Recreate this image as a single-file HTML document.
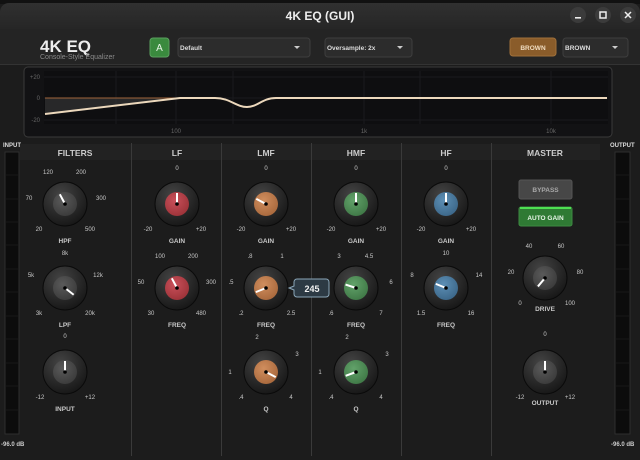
<!DOCTYPE html>
<html><head><meta charset="utf-8"><style>
*{margin:0;padding:0;box-sizing:border-box}
body{width:640px;height:460px;background:#111;overflow:hidden;font-family:"Liberation Sans",sans-serif}
svg{position:absolute;left:0;top:0}
</style></head><body>
<svg width="640" height="460" viewBox="0 0 640 460" font-family="Liberation Sans, sans-serif">
<defs>
<radialGradient id="ko" cx="0.4" cy="0.3" r="0.8"><stop offset="0" stop-color="#444"/><stop offset="1" stop-color="#121212"/></radialGradient>
<radialGradient id="cg" cx="0.4" cy="0.35" r="0.7"><stop offset="0" stop-color="#5a5a5a"/><stop offset="1" stop-color="#3a3a3a"/></radialGradient>
<radialGradient id="cr" cx="0.4" cy="0.35" r="0.7"><stop offset="0" stop-color="#c9505a"/><stop offset="1" stop-color="#9c3238"/></radialGradient>
<radialGradient id="co" cx="0.4" cy="0.35" r="0.7"><stop offset="0" stop-color="#d08e5e"/><stop offset="1" stop-color="#a8683c"/></radialGradient>
<radialGradient id="cgr" cx="0.4" cy="0.35" r="0.7"><stop offset="0" stop-color="#62a26a"/><stop offset="1" stop-color="#3f7846"/></radialGradient>
<radialGradient id="cb" cx="0.4" cy="0.35" r="0.7"><stop offset="0" stop-color="#5d8fb5"/><stop offset="1" stop-color="#3b6688"/></radialGradient>
<linearGradient id="tb" x1="0" y1="0" x2="0" y2="1"><stop offset="0" stop-color="#303030"/><stop offset="1" stop-color="#262626"/></linearGradient>
</defs>
<rect x="0" y="0" width="640" height="460" fill="#1c1c1c"/>
<rect x="0" y="0" width="640" height="4" fill="#111"/>
<path d="M0 12a9 9 0 0 1 9-9h622a9 9 0 0 1 9 9v17H0z" fill="url(#tb)"/>
<text x="320" y="20" text-anchor="middle" fill="#eee" font-size="12" font-weight="bold">4K EQ (GUI)</text>
<circle cx="578" cy="15" r="8" fill="#3b3b3b"/><rect x="575" y="17" width="6" height="1.6" fill="#eee"/>
<circle cx="603" cy="15" r="8" fill="#3b3b3b"/><rect x="600" y="12" width="6" height="6" fill="none" stroke="#eee" stroke-width="1.5"/>
<circle cx="628" cy="15" r="8" fill="#3b3b3b"/><path d="M625 12l6 6M631 12l-6 6" stroke="#eee" stroke-width="1.5"/>
<rect x="0" y="29" width="640" height="35" fill="#242424"/>
<rect x="0" y="64" width="640" height="1" fill="#333"/>
<text x="40" y="52" fill="#eee" font-size="17" font-weight="bold">4K EQ</text>
<text x="40" y="59" fill="#8a8a8a" font-size="7">Console-Style Equalizer</text>
<rect x="150" y="38" width="19" height="19" rx="3" fill="#3a8a3e" stroke="#5aa05e"/>
<text x="159.5" y="51" text-anchor="middle" fill="#e8f5e8" font-size="10">A</text>
<rect x="178" y="38" width="132" height="19" rx="3" fill="#2c2c2c" stroke="#3e3e3e"/>
<text x="180" y="50" fill="#ddd" font-size="6.5" font-weight="bold">Default</text>
<path d="M294 46h6l-3 3z" fill="#ccc"/>
<rect x="325" y="38" width="87" height="19" rx="3" fill="#2c2c2c" stroke="#3e3e3e"/>
<text x="327" y="50" fill="#ddd" font-size="6.5" font-weight="bold">Oversample: 2x</text>
<path d="M397 46h6l-3 3z" fill="#ccc"/>
<rect x="510" y="38" width="46" height="18" rx="3" fill="#8a5c2a" stroke="#a0703a"/>
<text x="533" y="50" text-anchor="middle" fill="#f0dcc0" font-size="6.5" font-weight="bold">BROWN</text>
<rect x="563" y="38" width="65" height="19" rx="3" fill="#2c2c2c" stroke="#3e3e3e"/>
<text x="565" y="50" fill="#ddd" font-size="6.5" font-weight="bold">BROWN</text>
<path d="M612 46h6l-3 3z" fill="#ccc"/>
<rect x="24" y="67" width="588" height="70" rx="4" fill="#121214" stroke="#3a3a3a"/>
<rect x="44" y="71" width="564" height="53" fill="#0e0e10"/>
<g stroke="#1a1a1e" stroke-width="1">
<path d="M116 71v53M176 71v53M233 71v53M364 71v53M420 71v53M551 71v53M44 77h564M44 98h564M44 120h564"/>
</g>
<text x="40" y="79" text-anchor="end" fill="#666" font-size="6">+20</text>
<text x="40" y="100" text-anchor="end" fill="#666" font-size="6">0</text>
<text x="40" y="122" text-anchor="end" fill="#666" font-size="6">-20</text>
<text x="176" y="133" text-anchor="middle" fill="#666" font-size="6">100</text>
<text x="364" y="133" text-anchor="middle" fill="#666" font-size="6">1k</text>
<text x="551" y="133" text-anchor="middle" fill="#666" font-size="6">10k</text>
<path d="M45 98 L45 114 L180 98 Z" fill="#3a3a3a" opacity="0.6"/>
<path d="M45 98H190" stroke="#a0643a" stroke-width="1"/>
<path d="M45 114 L180 98 L215 98 C230 98 236 107 247 107 C258 107 262 98 276 98 L607 98" fill="none" stroke="#ecd8bc" stroke-width="2"/>
<text x="3" y="147" fill="#ddd" font-size="6" font-weight="bold">INPUT</text>
<rect x="5" y="152" width="14" height="282" fill="#0c0c0c" stroke="#2e2e2e"/>
<text x="1" y="446" fill="#ccc" font-size="6" font-weight="bold">-96.0 dB</text>
<text x="610" y="147" fill="#ddd" font-size="6" font-weight="bold">OUTPUT</text>
<rect x="615" y="152" width="15" height="282" fill="#0c0c0c" stroke="#2e2e2e"/>
<text x="611" y="446" fill="#ccc" font-size="6" font-weight="bold">-96.0 dB</text>
<g stroke="#181818"><path d="M6 175h12M6 199h12M6 222h12M6 245h12M6 269h12M6 292h12M6 316h12M6 339h12M6 363h12M6 386h12M6 410h12M616 175h13M616 199h13M616 222h13M616 245h13M616 269h13M616 292h13M616 316h13M616 339h13M616 363h13M616 386h13M616 410h13"/></g>
<rect x="20" y="144" width="580" height="16" fill="#222"/>
<g fill="#3a3a3a"><rect x="131" y="143" width="1" height="313"/><rect x="221" y="143" width="1" height="313"/><rect x="311" y="143" width="1" height="313"/><rect x="401" y="143" width="1" height="313"/><rect x="491" y="143" width="1" height="313"/></g>
<g fill="#ccc" font-size="8.5" font-weight="bold" text-anchor="middle">
<text x="75" y="156">FILTERS</text><text x="177" y="156">LF</text><text x="266" y="156">LMF</text><text x="356" y="156">HMF</text><text x="446" y="156">HF</text><text x="545" y="156">MASTER</text>
</g>
<g>
<g transform="translate(65,204)"><circle r="22" fill="url(#ko)" stroke="#0a0a0a"/><circle r="12" fill="url(#cg)"/><line y2="-11" stroke="#fff" stroke-width="2" transform="rotate(-28)"/><circle r="1.8" fill="#000"/></g>
<g transform="translate(65,288)"><circle r="22" fill="url(#ko)" stroke="#0a0a0a"/><circle r="12" fill="url(#cg)"/><line y2="-11" stroke="#fff" stroke-width="2" transform="rotate(128)"/><circle r="1.8" fill="#000"/></g>
<g transform="translate(65,372)"><circle r="22" fill="url(#ko)" stroke="#0a0a0a"/><circle r="12" fill="url(#cg)"/><line y2="-11" stroke="#fff" stroke-width="2"/><circle r="1.8" fill="#000"/></g>
<g transform="translate(177,204)"><circle r="22" fill="url(#ko)" stroke="#0a0a0a"/><circle r="12" fill="url(#cr)"/><line y2="-11" stroke="#fff" stroke-width="2"/><circle r="1.8" fill="#000"/></g>
<g transform="translate(177,288)"><circle r="22" fill="url(#ko)" stroke="#0a0a0a"/><circle r="12" fill="url(#cr)"/><line y2="-11" stroke="#fff" stroke-width="2" transform="rotate(-28)"/><circle r="1.8" fill="#000"/></g>
<g transform="translate(266,204)"><circle r="22" fill="url(#ko)" stroke="#0a0a0a"/><circle r="12" fill="url(#co)"/><line y2="-11" stroke="#fff" stroke-width="2" transform="rotate(-62)"/><circle r="1.8" fill="#000"/></g>
<g transform="translate(266,288)"><circle r="22" fill="url(#ko)" stroke="#0a0a0a"/><circle r="12" fill="url(#co)"/><line y2="-11" stroke="#fff" stroke-width="2" transform="rotate(-112)"/><circle r="1.8" fill="#000"/></g>
<g transform="translate(266,372)"><circle r="22" fill="url(#ko)" stroke="#0a0a0a"/><circle r="12" fill="url(#co)"/><line y2="-11" stroke="#fff" stroke-width="2" transform="rotate(118)"/><circle r="1.8" fill="#000"/></g>
<g transform="translate(356,204)"><circle r="22" fill="url(#ko)" stroke="#0a0a0a"/><circle r="12" fill="url(#cgr)"/><line y2="-11" stroke="#fff" stroke-width="2"/><circle r="1.8" fill="#000"/></g>
<g transform="translate(356,288)"><circle r="22" fill="url(#ko)" stroke="#0a0a0a"/><circle r="12" fill="url(#cgr)"/><line y2="-11" stroke="#fff" stroke-width="2" transform="rotate(-72)"/><circle r="1.8" fill="#000"/></g>
<g transform="translate(356,372)"><circle r="22" fill="url(#ko)" stroke="#0a0a0a"/><circle r="12" fill="url(#cgr)"/><line y2="-11" stroke="#fff" stroke-width="2" transform="rotate(-110)"/><circle r="1.8" fill="#000"/></g>
<g transform="translate(446,204)"><circle r="22" fill="url(#ko)" stroke="#0a0a0a"/><circle r="12" fill="url(#cb)"/><line y2="-11" stroke="#fff" stroke-width="2"/><circle r="1.8" fill="#000"/></g>
<g transform="translate(446,288)"><circle r="22" fill="url(#ko)" stroke="#0a0a0a"/><circle r="12" fill="url(#cb)"/><line y2="-11" stroke="#fff" stroke-width="2" transform="rotate(-68)"/><circle r="1.8" fill="#000"/></g>
<g transform="translate(545,278)"><circle r="22" fill="url(#ko)" stroke="#0a0a0a"/><circle r="12" fill="url(#cg)"/><line y2="-11" stroke="#fff" stroke-width="2" transform="rotate(-140)"/><circle r="1.8" fill="#000"/></g>
<g transform="translate(545,372)"><circle r="22" fill="url(#ko)" stroke="#0a0a0a"/><circle r="12" fill="url(#cg)"/><line y2="-11" stroke="#fff" stroke-width="2"/><circle r="1.8" fill="#000"/></g>
</g>
<g fill="#c8c8c8" font-size="6" text-anchor="middle">
<text x="48" y="174">120</text><text x="81" y="174">200</text><text x="29" y="200">70</text><text x="101" y="200">300</text><text x="39" y="231">20</text><text x="90" y="231">500</text>
<text x="65" y="255">8k</text><text x="31" y="277">5k</text><text x="98" y="277">12k</text><text x="39" y="315">3k</text><text x="90" y="315">20k</text>
<text x="65" y="338">0</text><text x="40" y="399">-12</text><text x="90" y="399">+12</text>
<text x="177" y="170">0</text><text x="148" y="231">-20</text><text x="201" y="231">+20</text>
<text x="160" y="258">100</text><text x="193" y="258">200</text><text x="141" y="284">50</text><text x="211" y="284">300</text><text x="151" y="315">30</text><text x="201" y="315">480</text>
<text x="266" y="170">0</text><text x="241" y="231">-20</text><text x="291" y="231">+20</text>
<text x="250" y="258">.8</text><text x="282" y="258">1</text><text x="231" y="284">.5</text><text x="241" y="315">.2</text><text x="291" y="315">2.5</text>
<text x="257" y="339">2</text><text x="297" y="356">3</text><text x="230" y="374">1</text><text x="241" y="399">.4</text><text x="291" y="399">4</text>
<text x="356" y="170">0</text><text x="331" y="231">-20</text><text x="381" y="231">+20</text>
<text x="339" y="258">3</text><text x="369" y="258">4.5</text><text x="391" y="284">6</text><text x="331" y="315">.6</text><text x="381" y="315">7</text>
<text x="347" y="339">2</text><text x="387" y="356">3</text><text x="320" y="374">1</text><text x="331" y="399">.4</text><text x="381" y="399">4</text>
<text x="446" y="170">0</text><text x="421" y="231">-20</text><text x="471" y="231">+20</text>
<text x="446" y="255">10</text><text x="412" y="277">8</text><text x="479" y="277">14</text><text x="421" y="315">1.5</text><text x="471" y="315">16</text>
<text x="529" y="248">40</text><text x="561" y="248">60</text><text x="511" y="274">20</text><text x="580" y="274">80</text><text x="520" y="305">0</text><text x="570" y="305">100</text>
<text x="545" y="336">0</text><text x="520" y="399">-12</text><text x="570" y="399">+12</text>
</g>
<g fill="#c8c8c8" font-size="6.5" font-weight="bold" text-anchor="middle">
<text x="65" y="243">HPF</text><text x="65" y="327">LPF</text><text x="65" y="411">INPUT</text>
<text x="177" y="243">GAIN</text><text x="177" y="327">FREQ</text>
<text x="266" y="243">GAIN</text><text x="266" y="327">FREQ</text><text x="266" y="411">Q</text>
<text x="356" y="243">GAIN</text><text x="356" y="327">FREQ</text><text x="356" y="411">Q</text>
<text x="446" y="243">GAIN</text><text x="446" y="327">FREQ</text>
<text x="545" y="311">DRIVE</text><text x="545" y="405">OUTPUT</text>
</g>
<rect x="519" y="180" width="53" height="19" rx="2" fill="#474747" stroke="#555"/>
<text x="545.5" y="192" text-anchor="middle" fill="#a8a8a8" font-size="6.5" font-weight="bold">BYPASS</text>
<rect x="519" y="207" width="53" height="19" rx="2" fill="#2f7a34" stroke="#3e8a42"/>
<rect x="520" y="207" width="51" height="2" fill="#4ee052"/>
<text x="545.5" y="220" text-anchor="middle" fill="#e8f5e8" font-size="6.5" font-weight="bold">AUTO GAIN</text>
<path d="M297 279h29a3 3 0 0 1 3 3v12a3 3 0 0 1-3 3h-29a3 3 0 0 1-3-3v-4l-5-2 5-2v-4a3 3 0 0 1 3-3z" fill="#2d3a44" stroke="#8aa6b8"/>
<text x="312" y="292" text-anchor="middle" fill="#f0f0f0" font-size="9" font-weight="bold">245</text>
</svg>
</body></html>
